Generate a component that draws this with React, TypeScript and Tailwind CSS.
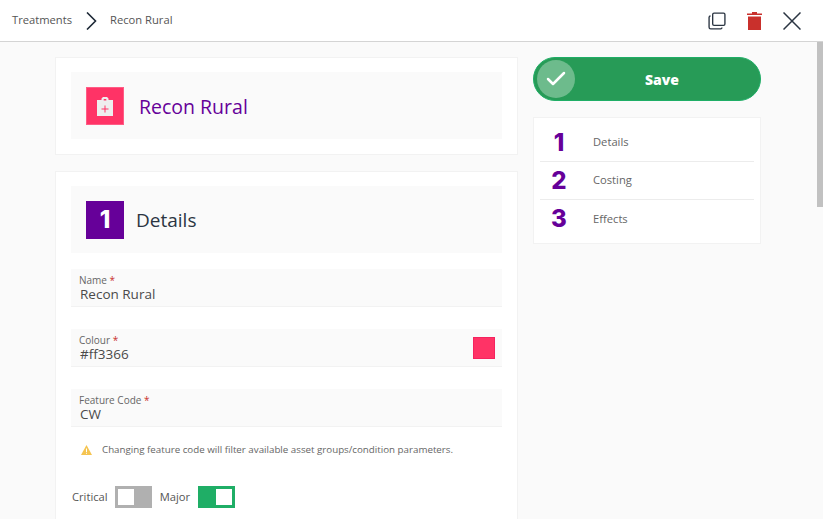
import React from 'react';
import { Check } from 'lucide-react';

const font = "font-['Open_Sans',sans-serif]";

function Field({ label, value, swatch }: { label: string; value: string; swatch?: boolean }) {
    return (
        <div className="flex h-[38px] items-center justify-between border-b border-[#f2f2f2] bg-[#fafafa] pl-2 pr-[7px]">
            <div className="pt-px">
                <div className="text-[10px] leading-[13px] text-[#666]">
                    {label} <span className="text-[#c9302c]">*</span>
                </div>
                <div className="pl-px text-[13.5px] leading-[15px] text-[#4a4a4a]">{value}</div>
            </div>
            {swatch && <div className="h-[22px] w-[22px] border border-[#f5235f] bg-[#ff3366]" />}
        </div>
    );
}

function Toggle({ on }: { on: boolean }) {
    return (
        <div className={`flex h-[22px] w-[37px] items-center border-[3px] ${on ? 'justify-end border-[#1fae66] bg-[#1fae66]' : 'justify-start border-[#b0b0b0] bg-[#b0b0b0]'}`}>
            <div className="h-[16px] w-[16px] bg-white" />
        </div>
    );
}

export default function App() {
    return (
        <div className={`relative h-[519px] w-[823px] overflow-hidden bg-[#fafafa] ${font}`}>
            <header className="flex h-[42px] items-center justify-between border-b border-[#d4d4d4] bg-white pl-3 pr-[22px]">
                <div className="flex items-center text-[11.2px] text-[#555]">
                    <span>Treatments</span>
                    <svg width="11" height="18" viewBox="0 0 11 18" className="ml-[14px] mr-[13px]" fill="none" stroke="#1f2a38" strokeWidth="1.6">
                        <path d="M1 .5l8.500 8.500-8.500 8.500" />
                    </svg>
                    <span>Recon Rural</span>
                </div>
                <div className="flex items-center gap-[21px]">
                    <svg width="18" height="18" viewBox="0 0 20 20" fill="none" stroke="#2b3542" strokeWidth="1.5">
                        <rect x="5.200" y="1.200" width="13.600" height="13.600" rx="1.500" />
                        <path d="M2.800 4.500A1.600 1.600 0 0 0 1.200 6v11a1.800 1.800 0 0 0 1.800 1.800h11a1.600 1.600 0 0 0 1.500-1.600" />
                    </svg>
                    <svg width="15" height="18" viewBox="0 0 15 18">
                        <path d="M5 0h5v1.500h5V3H0V1.500h5z" fill="#c9302c" />
                        <path d="M1 4.500h13V18H1z" fill="#c9302c" />
                    </svg>
                    <svg width="18" height="18" viewBox="0 0 18 18" fill="none" stroke="#2b3542" strokeWidth="1.500">
                        <path d="M.5.500l17 17M17.500.500l-17 17" />
                    </svg>
                </div>
            </header>

            <main className="flex gap-[15px] pl-[55px] pt-[15px]">
                <div className="flex w-[463px] flex-col gap-[16px]">
                    <section className="border border-[#f2f2f2] bg-white px-[15px] pt-[14px] pb-[15px]">
                        <div className="flex h-[67px] items-center gap-[15px] bg-[#fafafa] pl-[15px]">
                            <div className="flex h-[38px] w-[38px] items-center justify-center border border-[#ff5c85] bg-[#ff3366]">
                                <svg width="18" height="20" viewBox="0 0 18 20">
                                    <path d="M1 4h4.500V2.500L7 1h4l1.500 1.500V4H17v16H1z" fill="#eeeeee" />
                                    <rect x="7.700" y="3" width="2.600" height="1.500" fill="#ff3366" />
                                    <path d="M8.500 9.500h1v3h3v1h-3v3h-1v-3h-3v-1h3z" fill="#ff3366" />
                                </svg>
                            </div>
                            <h1 className="pt-[2px] text-[19.5px] font-normal text-[#660099]">Recon Rural</h1>
                        </div>
                    </section>

                    <section className="border border-[#f2f2f2] bg-white px-[15px] pt-[14px] pb-4">
                        <div className="flex h-[67px] items-center gap-3 bg-[#fafafa] pl-[15px]">
                            <div className="flex h-[38px] w-[38px] items-center justify-center bg-[#660099] font-['Inter',sans-serif] text-2xl font-extrabold text-white">
                                1
                            </div>
                            <h2 className="pt-[2px] text-[19px] font-normal text-[#2b3542]">Details</h2>
                        </div>
                        <div className="mt-[16px] flex flex-col gap-[22px]">
                            <Field label="Name" value="Recon Rural" />
                            <Field label="Colour" value="#ff3366" swatch />
                            <Field label="Feature Code" value="CW" />
                        </div>
                        <div className="mt-[15px] flex items-center pl-[10px] text-[9.750px] leading-[16px] text-[#666]">
                            <svg width="11" height="10" viewBox="0 0 11 10" className="mr-[10px]">
                                <path d="M5.500 0L11 10H0z" fill="#f5c451" />
                                <path d="M5 3.500h1v3.500H5zM5 7.800h1v1H5z" fill="#fff" />
                            </svg>
                            Changing feature code will filter available asset groups/condition parameters.
                        </div>
                        <div className="mt-[28px] flex items-center gap-2 text-[11.2px] text-[#555]">
                            <span className="ml-px -mr-px">Critical</span>
                            <Toggle on={false} />
                            <span>Major</span>
                            <Toggle on />
                        </div>
                    </section>
                </div>

                <aside className="flex w-[228px] flex-col gap-[16px]">
                    <button className="relative flex h-[44px] items-center justify-center rounded-full border border-[#1fae66] bg-[#279b57] pl-[30px] text-[14px] font-extrabold text-white">
                        Save
                        <span className="absolute left-[3px] top-[2px] flex h-[38px] w-[38px] items-center justify-center rounded-full bg-[#6dbb8c]">
                            <Check className="h-[24px] w-[24px]" strokeWidth={2.5} />
                        </span>
                    </button>
                    <nav className="border border-[#f2f2f2] bg-white px-[6px] pb-[5px] pt-[6px]">
                        {['Details', 'Costing', 'Effects'].map((item, i) => (
                            <div key={item} className={`flex h-[38px] items-center ${i < 2 ? 'border-b border-[#ececec]' : ''}`}>
                                <span className="w-[38px] text-center font-['Inter',sans-serif] text-2xl font-extrabold text-[#660099]">{i + 1}</span>
                                <span className="ml-[15px] text-[11.200px] text-[#666]">{item}</span>
                            </div>
                        ))}
                    </nav>
                </aside>
            </main>

            <div className="absolute right-0 top-[42px] h-[165px] w-[6px] bg-[#c1c1c1]" />
        </div>
    );
}
